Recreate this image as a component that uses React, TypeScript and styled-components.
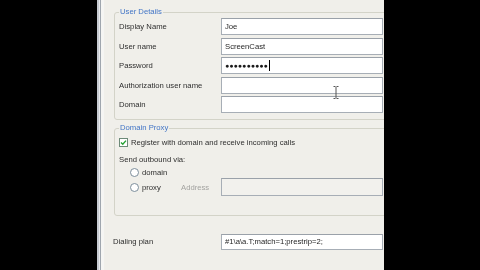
import React from 'react';
import styled, { createGlobalStyle } from 'styled-components';

const Global = createGlobalStyle`
  html, body { margin: 0; padding: 0; background: #000; }
  body { width: 480px; height: 270px; overflow: hidden; font-family: "Liberation Sans", Arial, sans-serif; }
`;

const Screen = styled.div`
  display: flex;
  width: 480px;
  height: 270px;
  background: #000;
`;

const Side = styled.div<{ $w: number }>`
  flex: none;
  width: ${p => p.$w}px;
  background: #000;
`;

const Frame = styled.div`
  flex: none;
  width: 7px;
  background: linear-gradient(to right, #c6cad0 0 2px, #e8eaed 2px 3px, #9fa6ae 3px 4px, #f5f5f3 4px 7px);
`;

const Panel = styled.div`
  position: relative;
  flex: none;
  width: 280px;
  height: 270px;
  box-sizing: border-box;
  padding: 7px 0 0 10px;
  overflow: hidden;
  background: #f0efea;
  color: #2e2e2e;
  font-size: 7.7px;
  filter: blur(0.25px);
`;

const Group = styled.fieldset<{ $pb: number; $mt: number }>`
  width: 290px;
  box-sizing: border-box;
  margin: ${p => p.$mt}px 0 0 0;
  padding: 0 0 ${p => p.$pb}px 4px;
  border: 1px solid #d3d3c8;
  border-radius: 3px;
  min-width: 0;
`;

const Legend = styled.legend`
  padding: 0 1px;
  margin: 0;
  height: 10px;
  line-height: 10px;
  font-size: 7.7px;
  color: #4275c6;
`;

const Row = styled.div<{ $h: number; $indent?: number }>`
  display: flex;
  align-items: center;
  height: ${p => p.$h}px;
  padding-left: ${p => p.$indent ?? 0}px;
`;

const Label = styled.span<{ $w: number; $muted?: boolean }>`
  flex: none;
  width: ${p => p.$w}px;
  white-space: nowrap;
  color: ${p => (p.$muted ? '#a3a3a0' : '#2e2e2e')};
`;

const Input = styled.div<{ $h: number; $disabled?: boolean }>`
  flex: none;
  width: 162px;
  display: flex;
  align-items: center;
  height: ${p => p.$h}px;
  box-sizing: border-box;
  padding-left: 3px;
  border: 1px solid #a7aeb6;
  border-top-color: #9aa1a9;
  background: ${p => (p.$disabled ? '#f2f1ed' : '#fff')};
  color: #262626;
  white-space: nowrap;
`;

const Dots = styled.span`
  font-size: 7px;
  letter-spacing: 0.05px;
  color: #1a1a1a;
`;

const Caret = styled.span`
  display: inline-block;
  width: 1px;
  height: 11px;
  margin-left: 1px;
  background: #000;
`;

const Check = styled.span`
  flex: none;
  width: 9px;
  height: 9px;
  box-sizing: border-box;
  margin-right: 3px;
  border: 1px solid #6d8a78;
  background: #fff;
  display: flex;
  align-items: center;
  justify-content: center;
`;

const Radio = styled.span`
  flex: none;
  width: 9px;
  height: 9px;
  box-sizing: border-box;
  margin-right: 3px;
  border: 1px solid #7d8e9c;
  border-radius: 50%;
  background: #fff;
`;

const Text = styled.span`
  white-space: nowrap;
`;

const Plan = styled.div`
  display: flex;
  align-items: center;
  height: 17px;
  margin: 17px 0 0 -1px;
`;

const IBeam = styled.svg`
  position: absolute;
  left: 229px;
  top: 86px;
`;

export default function App() {
  return (
    <>
      <Global />
      <Screen>
        <Side $w={97} />
        <Frame />
        <Panel>
          <Group $pb={4} $mt={0}>
            <Legend>User Details</Legend>
            <Row $h={19.5}>
              <Label $w={102}>Display Name</Label>
              <Input $h={17}>Joe</Input>
            </Row>
            <Row $h={19.5}>
              <Label $w={102}>User name</Label>
              <Input $h={17}>ScreenCast</Input>
            </Row>
            <Row $h={19.5}>
              <Label $w={102}>Password</Label>
              <Input $h={17}>
                <Dots>●●●●●●●●●●</Dots>
                <Caret />
              </Input>
            </Row>
            <Row $h={19.5}>
              <Label $w={102}>Authorization user name</Label>
              <Input $h={17} />
            </Row>
            <Row $h={19.5}>
              <Label $w={102}>Domain</Label>
              <Input $h={17} />
            </Row>
          </Group>
          <Group $pb={19} $mt={3.5}>
            <Legend>Domain Proxy</Legend>
            <Row $h={19}>
              <Check>
                <svg width="7" height="7" viewBox="0 0 7 7">
                  <path d="M1 3.4 L2.8 5.2 L6 1.6" fill="none" stroke="#22a030" strokeWidth="1.4" />
                </svg>
              </Check>
              <Text>Register with domain and receive incoming calls</Text>
            </Row>
            <Row $h={14}>
              <Text>Send outbound via:</Text>
            </Row>
            <Row $h={12} $indent={11}>
              <Radio />
              <Text>domain</Text>
            </Row>
            <Row $h={18} $indent={11}>
              <Radio />
              <Label $w={39}>proxy</Label>
              <Label $w={40} $muted>Address</Label>
              <Input $h={18} $disabled />
            </Row>
          </Group>
          <Plan>
            <Label $w={108}>Dialing plan</Label>
            <Input $h={16}>#1\a\a.T;match=1;prestrip=2;</Input>
          </Plan>
          <IBeam width="6" height="13" viewBox="0 0 6 13">
            <path d="M0.5 0.5 H2.5 M3.5 0.5 H5.5 M3 1 V12 M0.5 12.5 H2.5 M3.5 12.5 H5.5" stroke="#555" strokeWidth="1" fill="none" />
          </IBeam>
        </Panel>
        <Side $w={96} />
      </Screen>
    </>
  );
}
